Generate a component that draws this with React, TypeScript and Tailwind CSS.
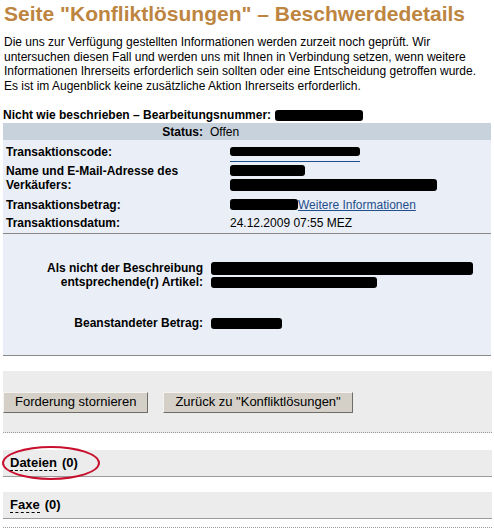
import React from "react";

const Blob = ({ className }: { className: string }) => (
  <span className={`inline-block rounded-[3px] bg-black align-middle ${className}`} />
);

const App = () => {
  return (
    <div className="relative h-[530px] w-[494px] overflow-hidden bg-white font-['Liberation_Sans',Arial,sans-serif] text-[12px] text-black">
      <h1 className="px-[4px] pt-[2px] text-[21px] leading-[24px] font-bold text-[#bd853f]">
        Seite "Konfliktlösungen" – Beschwerdedetails
      </h1>

      <p className="mt-[9px] px-[4px] leading-[14.5px]">
        Die uns zur Verfügung gestellten Informationen werden zurzeit noch geprüft. Wir untersuchen
        diesen Fall und werden uns mit Ihnen in Verbindung setzen, wenn weitere Informationen
        Ihrerseits erforderlich sein sollten oder eine Entscheidung getroffen wurde. Es ist im
        Augenblick keine zusätzliche Aktion Ihrerseits erforderlich.
      </p>

      <div className="mt-[14px] flex h-[16px] items-center px-[3px] font-bold">
        Nicht wie beschrieben – Bearbeitungsnummer:
        <Blob className="ml-[4px] h-[11px] w-[88px]" />
      </div>

      <div className="mr-[3px] ml-[3px]">
        {/* status bar */}
        <div className="flex h-[17px] items-center bg-[#c8d2dd]">
          <span className="w-[200px] text-right font-bold">Status:</span>
          <span className="ml-[7px]">Offen</span>
        </div>

        {/* transaction info */}
        <div className="border-b border-[#8a8a8a] bg-[#eaeff7] pt-[2px] pb-[1px]">
          <div className="flex h-[19px] items-center">
            <span className="w-[227px] pl-[3px] font-bold">Transaktionscode:</span>
            <span className="border-b border-[#1f4e8c] pb-[1px]">
              <Blob className="h-[9px] w-[130px]" />
            </span>
          </div>
          <div className="flex h-[34px] items-start pt-[3px] leading-[14px]">
            <span className="w-[227px] pl-[3px] font-bold">
              Name und E-Mail-Adresse des
              <br />
              Verkäufers:
            </span>
            <span className="flex flex-col gap-[3px] pt-[1px]">
              <Blob className="h-[11px] w-[75px]" />
              <Blob className="h-[12px] w-[207px]" />
            </span>
          </div>
          <div className="flex h-[19px] items-center">
            <span className="w-[227px] pl-[3px] font-bold">Transaktionsbetrag:</span>
            <Blob className="h-[11px] w-[68px]" />
            <a className="text-[#1f4e8c] underline">Weitere Informationen</a>
          </div>
          <div className="flex h-[18px] items-center">
            <span className="w-[227px] pl-[3px] font-bold">Transaktionsdatum:</span>
            <span>24.12.2009 07:55 MEZ</span>
          </div>
        </div>

        {/* item details */}
        <div className="border-b border-[#8a8a8a] bg-[#eaeff7] pt-[27px] pb-[25px] leading-[14px]">
          <div className="flex">
            <span className="w-[200px] text-right font-bold">
              Als nicht der Beschreibung
              <br />
              entsprechende(r) Artikel:
            </span>
            <span className="ml-[8px] flex flex-col items-start gap-[2px] pt-[1px]">
              <Blob className="h-[13px] w-[262px]" />
              <Blob className="h-[11px] w-[166px]" />
            </span>
          </div>
          <div className="mt-[27px] flex items-center">
            <span className="w-[200px] text-right font-bold">Beanstandeter Betrag:</span>
            <Blob className="ml-[8px] h-[11px] w-[71px]" />
          </div>
        </div>
      </div>

      {/* actions */}
      <div className="mt-[15px] mr-[2px] ml-[3px] flex h-[62px] items-center gap-[15px] border-b border-dotted border-[#9a9a9a] bg-[#ececec] pt-[1px] text-[13px]">
        <button className="h-[21px] border border-t-[#f4f3ef] border-r-[#6f6d68] border-b-[#6f6d68] border-l-[#f4f3ef] bg-[#d4d0c8] px-[11px] leading-[18px]">
          Forderung stornieren
        </button>
        <button className="h-[21px] border border-t-[#f4f3ef] border-r-[#6f6d68] border-b-[#6f6d68] border-l-[#f4f3ef] bg-[#d4d0c8] px-[11px] leading-[18px]">
          Zurück zu "Konfliktlösungen"
        </button>
      </div>

      <div className="relative mt-[17px] mr-[2px] ml-[3px] flex h-[27px] items-center border-b border-[#9a9a9a] bg-[#ececec] pl-[7px] text-[13px] font-bold">
        <span className="border-b border-dashed border-black leading-[14px]">Dateien</span>
        <span className="ml-[5px]">(0)</span>
        <span className="absolute top-[-4px] left-[-1px] h-[34px] w-[98px] rounded-[50%] border-2 border-[#c8102e]" />
      </div>

      <div className="mt-[15px] mr-[2px] ml-[3px] flex h-[27px] items-center border-b border-[#9a9a9a] bg-[#ececec] pl-[7px] text-[13px] font-bold">
        <span className="border-b border-dashed border-black leading-[14px]">Faxe</span>
        <span className="ml-[5px]">(0)</span>
      </div>

      <div className="mt-[8px] mr-[2px] ml-[3px] border-b border-dotted border-[#9a9a9a]" />
    </div>
  );
};

export default App;
